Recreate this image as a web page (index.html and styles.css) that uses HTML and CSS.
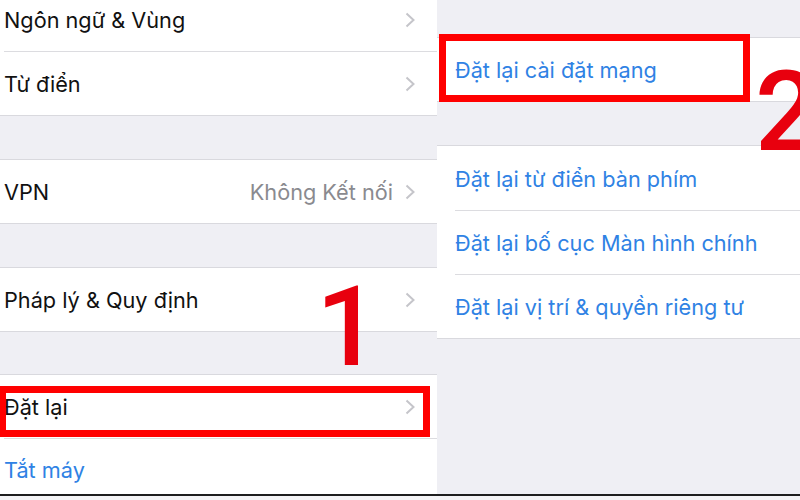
FILE: index.html
```html
<!DOCTYPE html>
<html lang="vi">
<head>
<meta charset="utf-8">
<link rel="stylesheet" href="styles.css">
</head>
<body>
<div class="screen">
  <div class="panel left">
    <div class="group first">
      <div class="row"><span class="label">Ngôn ngữ &amp; Vùng</span><svg class="chev" viewBox="0 0 10 16"><polyline points="1.5,1.5 8.5,8 1.5,14.5"/></svg></div>
      <div class="row"><span class="label">Từ điển</span><svg class="chev" viewBox="0 0 10 16"><polyline points="1.5,1.5 8.5,8 1.5,14.5"/></svg></div>
    </div>
    <div class="group">
      <div class="row"><span class="label">VPN</span><span class="detail">Không Kết nối</span><svg class="chev" viewBox="0 0 10 16"><polyline points="1.5,1.5 8.5,8 1.5,14.5"/></svg></div>
    </div>
    <div class="group">
      <div class="row"><span class="label">Pháp lý &amp; Quy định</span><svg class="chev" viewBox="0 0 10 16"><polyline points="1.5,1.5 8.5,8 1.5,14.5"/></svg></div>
    </div>
    <div class="group last">
      <div class="row"><span class="label">Đặt lại</span><svg class="chev" viewBox="0 0 10 16"><polyline points="1.5,1.5 8.5,8 1.5,14.5"/></svg></div>
      <div class="row"><span class="label link">Tắt máy</span></div>
    </div>
  </div>
  <div class="panel right">
    <div class="group top">
      <div class="row"><span class="label link">Đặt lại cài đặt mạng</span></div>
    </div>
    <div class="group">
      <div class="row"><span class="label link">Đặt lại từ điển bàn phím</span></div>
      <div class="row"><span class="label link">Đặt lại bố cục Màn hình chính</span></div>
      <div class="row"><span class="label link">Đặt lại vị trí &amp; quyền riêng tư</span></div>
    </div>
  </div>
  <div class="mark box-one"></div>
  <div class="mark box-two"></div>
  <div class="num num-one">1</div>
  <div class="num num-two">2</div>
</div>
<div class="baseline"></div>
</body>
</html>
```

FILE: styles.css
```css
* { box-sizing: border-box; }
html, body { margin: 0; padding: 0; }
body {
  width: 800px;
  height: 500px;
  background: #f4f4f6;
  font-family: "Inter", "Liberation Sans", sans-serif;
  overflow: hidden;
}
.screen {
  position: relative;
  height: 494px;
  display: flex;
  overflow: hidden;
  background: #efeff4;
}
.panel {
  display: flex;
  flex-direction: column;
  background: #efeff4;
}
.left { width: 437px; }
.right { flex: 1; }

.group {
  background: #fff;
  border-top: 1px solid #d9d9de;
  border-bottom: 1px solid #d9d9de;
  margin-top: 43px;
}
.left .group.first { margin-top: -13px; border-top: none; }
.left .group.last { margin-top: 42px; border-bottom: none; }
.right .group.top { margin-top: 37px; }

.row {
  display: flex;
  align-items: center;
  height: 63px;
  padding-left: 4px;
  padding-right: 22px;
  font-size: 21.7px;
  color: #111;
  position: relative;
}
.left .group.first .row { height: 64px; padding-top: 1px; }
.right .row { padding-left: 18px; height: 64px; }
.right .group.top .row { height: 63px; padding-top: 1px; }
.right .group:not(.top) .row { padding-top: 1px; }

.row + .row { border-top: 1px solid #dcdce0; }
.left .row + .row { margin-left: 4px; padding-left: 0; }
.right .row + .row { margin-left: 18px; padding-left: 0; }

.label { flex: 1; white-space: nowrap; }
.link { color: #2f82e4; }
.detail { color: #8a8a8f; margin-right: 12px; }
.chev {
  width: 10px;
  height: 16px;
  fill: none;
  stroke: #c5c5ca;
  stroke-width: 2;
}

.mark {
  position: absolute;
  border: 7px solid #ff0000;
}
.box-one { left: -1px; top: 386px; width: 431px; height: 51px; }
.box-two { left: 439px; top: 34px; width: 311px; height: 68px; }

.num {
  position: absolute;
  font-family: "Roboto", "Liberation Sans", sans-serif;
  font-weight: 500;
  font-size: 112px;
  line-height: 1;
  color: #e8000e;
}
.num-one { left: 316px; top: 271px; }
.num-two { left: 755px; top: 56px; }

.baseline {
  height: 2px;
  background: #1e1e1e;
}
```
